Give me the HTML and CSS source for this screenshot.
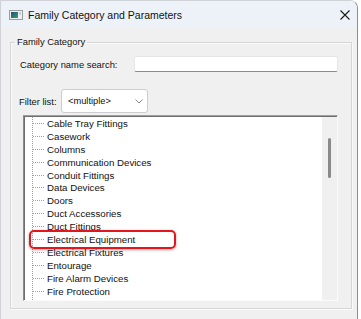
FILE: index.html
```html
<!DOCTYPE html>
<html lang="en">
  <head>
    <meta charset="utf-8" />
    <title>Family Category and Parameters</title>
    <link rel="stylesheet" href="styles.css">
  </head>
  <body>
    <div class="window">
      <div class="titlebar">
        <svg class="app-icon" width="14" height="10" viewBox="0 0 14 10">
          <defs>
            <linearGradient id="pic" x1="0" y1="0" x2="1" y2="1">
              <stop offset="0" stop-color="#1d4f7a" />
              <stop offset="1" stop-color="#3f9a6e" />
            </linearGradient>
          </defs>
          <rect x="0.5" y="0.5" width="13" height="9" fill="#eef1f4" stroke="#9a9a9a" />
          <rect x="2" y="2" width="7" height="6" fill="url(#pic)" />
          <rect x="10" y="2" width="2" height="3" fill="#c9d3dc" />
        </svg>
        <span class="title">Family Category and Parameters</span>
        <svg class="close" width="10" height="10" viewBox="0 0 10 10">
          <path d="M0.5 0.5 L9.5 9.5 M9.5 0.5 L0.5 9.5" stroke="#1a1a1a" stroke-width="1.1" fill="none" />
        </svg>
      </div>

      <div class="content">
        <fieldset class="group">
          <legend>Family Category</legend>

          <div class="row search-row">
            <label class="label search-label">Category name search:</label>
            <input type="text" class="textbox" />
          </div>

          <div class="row filter-row">
            <label class="label filter-label">Filter list:</label>
            <div class="combo">
              <span>&lt;multiple&gt;</span>
              <svg class="chevron" width="8" height="5" viewBox="0 0 8 5">
                <path d="M0.5 0.5 L4 4 L7.5 0.5" stroke="#8a8a8a" fill="none" />
              </svg>
            </div>
          </div>

          <div class="tree">
            <div class="tree-pane">
              <ul class="tree-items">
                <li>Cable Tray Fittings</li>
                <li>Casework</li>
                <li>Columns</li>
                <li>Communication Devices</li>
                <li>Conduit Fittings</li>
                <li>Data Devices</li>
                <li>Doors</li>
                <li>Duct Accessories</li>
                <li>Duct Fittings</li>
                <li class="marked">Electrical Equipment</li>
                <li>Electrical Fixtures</li>
                <li>Entourage</li>
                <li>Fire Alarm Devices</li>
                <li>Fire Protection</li>
              </ul>
            </div>
            <div class="scrollbar">
              <div class="thumb"></div>
            </div>
          </div>
        </fieldset>
      </div>
    </div>
  </body>
</html>
```

FILE: styles.css
```css
body {
  margin: 0;
  background: #fff;
  font-family: "Liberation Sans", Arial, sans-serif;
  color: #111;
}

.window {
  width: 358px;
  height: 330px;
  box-sizing: border-box;
  background: #f0f0f0;
  border: 1px solid #cfd3d8;
  border-right-color: #8e8e8e;
  border-bottom: 0;
  border-radius: 0 8px 0 0;
  overflow: hidden;
}

.titlebar {
  height: 27px;
  background: #edf2f9;
  display: flex;
  align-items: center;
}

.app-icon {
  margin-left: 8px;
}

.title {
  margin-left: 5px;
  font-size: 10.5px;
  line-height: 14px;
  color: #111;
}

.close {
  margin-left: auto;
  margin-right: 7px;
}

.content {
  padding: 8px 0 0 9px;
}

.group {
  margin: 0;
  padding: 0 0 7px 0;
  width: 342px;
  box-sizing: border-box;
  border: 1px solid #d6d6d6;
  box-shadow: inset 1px 1px 0 #fafafa, 1px 1px 0 #fafafa;
}

.group legend {
  margin-left: 4px;
  padding: 0 2px;
  font-size: 9.4px;
  line-height: 12px;
  color: #111;
}

.row {
  display: flex;
  align-items: center;
  padding-left: 9px;
}

.label {
  font-size: 9.4px;
  color: #111;
}

.search-row {
  margin-top: 8px;
}

.search-label {
  width: 114px;
}

.textbox {
  width: 204px;
  height: 16px;
  box-sizing: border-box;
  margin: 0;
  padding: 0 4px;
  border: 1px solid #e6e6e6;
  border-bottom-color: #8c8c8c;
  border-radius: 2px;
  background: #fff;
  outline: none;
}

.filter-row {
  margin-top: 17px;
  padding-left: 8px;
}

.filter-label {
  width: 42px;
}

.combo {
  width: 87px;
  height: 24px;
  box-sizing: border-box;
  border: 1px solid #cdcdcd;
  border-radius: 3px;
  background: #fff;
  display: flex;
  align-items: center;
  padding: 0 4px 0 6px;
  font-size: 9.3px;
  color: #111;
}

.chevron {
  margin-left: auto;
}

.tree {
  margin: 2px 0 0 12px;
  width: 315px;
  height: 186px;
  box-sizing: border-box;
  display: flex;
  border-top: 1px solid #a0a0a0;
  border-left: 1px solid #8a8a8a;
  border-right: 1px solid #fbfbfb;
  border-bottom: 1px solid #fbfbfb;
  box-shadow: inset 1px 1px 0 #6e6e6e;
}

.tree-pane {
  flex: 1;
  background: #fff;
  padding-left: 7px;
  margin: 1px 0 0 1px;
  overflow: hidden;
}

.tree-items {
  list-style: none;
  margin: 0;
  padding: 0;
  height: 100%;
  border-left: 1px dotted #a0a0a0;
}

.tree-items li {
  height: 12.9px;
  display: flex;
  align-items: center;
  font-size: 9.7px;
  color: #111;
  white-space: nowrap;
}

.tree-items li::before {
  content: "";
  width: 11px;
  border-top: 1px dotted #a0a0a0;
  margin-right: 3px;
}

.tree-items li.marked {
  position: relative;
}

.tree-items li.marked::after {
  content: "";
  position: absolute;
  left: -4px;
  top: -3.5px;
  width: 147px;
  height: 19px;
  box-sizing: border-box;
  border: 2.5px solid #e3161e;
  border-radius: 5px;
  box-shadow: 0 1px 3px rgba(0, 0, 0, 0.35);
}

.scrollbar {
  width: 15px;
  background: #f0f0f0;
  margin-top: 1px;
}

.thumb {
  width: 3px;
  height: 40px;
  margin: 21px 0 0 6px;
  background: #8a8a8a;
  border-radius: 2px;
}
```
